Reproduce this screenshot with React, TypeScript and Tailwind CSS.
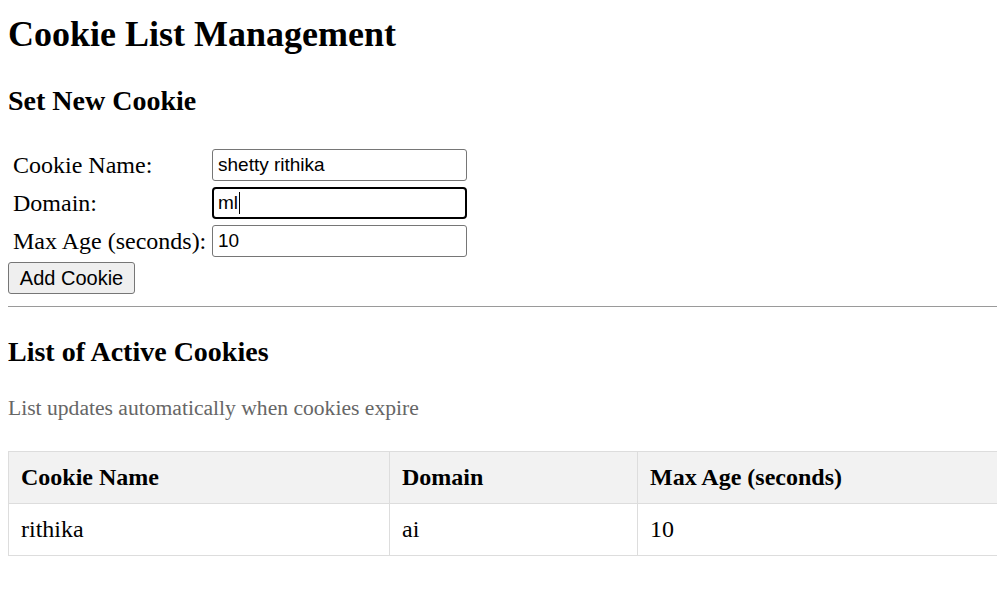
const cookies = [{ name: "rithika", domain: "ai", maxAge: 10 }];

function FormRow({ label, children }: { label: string; children: React.ReactNode }) {
    return (
        <div className="flex items-center h-[32px]">
            <div className="w-[204px] pl-[5px] text-[24px] leading-[32px]">{label}</div>
            {children}
        </div>
    );
}

export default function App() {
    const inputCls =
        "w-[255px] h-[32px] px-[5px] border border-[#767676] rounded-[3px] bg-white text-[19px] text-black outline-none";

    return (
        <div className="w-[997px] h-[601px] overflow-hidden bg-white text-black" style={{ fontFamily: '"Liberation Serif", "Times New Roman", serif' }}>
            <div className="w-[1153px] ml-[8px]">
                <h1 className="text-[36px] leading-[36px] font-bold mt-[16px]">Cookie List Management</h1>
                <h2 className="text-[28px] leading-[28px] font-bold mt-[35px]">Set New Cookie</h2>

                {/* Form */}
                <div className="mt-[34px] flex flex-col gap-[6px]">
                    <FormRow label="Cookie Name:">
                        <input className={inputCls} style={{ fontFamily: '"Liberation Sans", Arial, sans-serif' }} defaultValue="shetty rithika" />
                    </FormRow>
                    <FormRow label="Domain:">
                        <div className="w-[255px] h-[32px] px-[4px] border-2 border-black rounded-[4px] bg-white text-[19px] flex items-center" style={{ fontFamily: '"Liberation Sans", Arial, sans-serif' }}>
                            <span>ml</span>
                            <span className="inline-block w-[1px] h-[22px] bg-black ml-[1px]" />
                        </div>
                    </FormRow>
                    <FormRow label="Max Age (seconds):">
                        <input className={inputCls} style={{ fontFamily: '"Liberation Sans", Arial, sans-serif' }} defaultValue="10" />
                    </FormRow>
                </div>
                <button
                    className="mt-[5px] w-[127px] h-[32px] border border-[#767676] rounded-[3px] bg-[#efefef] text-[20px] text-black flex items-center justify-center"
                    style={{ fontFamily: '"Liberation Sans", Arial, sans-serif' }}
                >
                    Add Cookie
                </button>

                <hr className="mt-[12px] border-0 border-t border-[#9a9a9a]" />

                <h2 className="text-[28px] leading-[28px] font-bold mt-[31px]">List of Active Cookies</h2>
                <p className="text-[21.6px] leading-[22px] text-[#666] mt-[31px]">List updates automatically when cookies expire</p>

                {/* Table */}
                <table className="mt-[32px] w-full border-collapse text-[24px] leading-[27px]">
                    <thead>
                        <tr className="bg-[#f2f2f2]">
                            <th className="w-[381px] border border-[#ddd] px-[12px] py-[12px] text-left font-bold">Cookie Name</th>
                            <th className="w-[248px] border border-[#ddd] px-[12px] py-[12px] text-left font-bold">Domain</th>
                            <th className="border border-[#ddd] px-[12px] py-[12px] text-left font-bold">Max Age (seconds)</th>
                        </tr>
                    </thead>
                    <tbody>
                        {cookies.map((c) => (
                            <tr key={c.name}>
                                <td className="border border-[#ddd] px-[12px] py-[12px]">{c.name}</td>
                                <td className="border border-[#ddd] px-[12px] py-[12px]">{c.domain}</td>
                                <td className="border border-[#ddd] px-[12px] py-[12px]">{c.maxAge}</td>
                            </tr>
                        ))}
                    </tbody>
                </table>
            </div>
        </div>
    );
}
